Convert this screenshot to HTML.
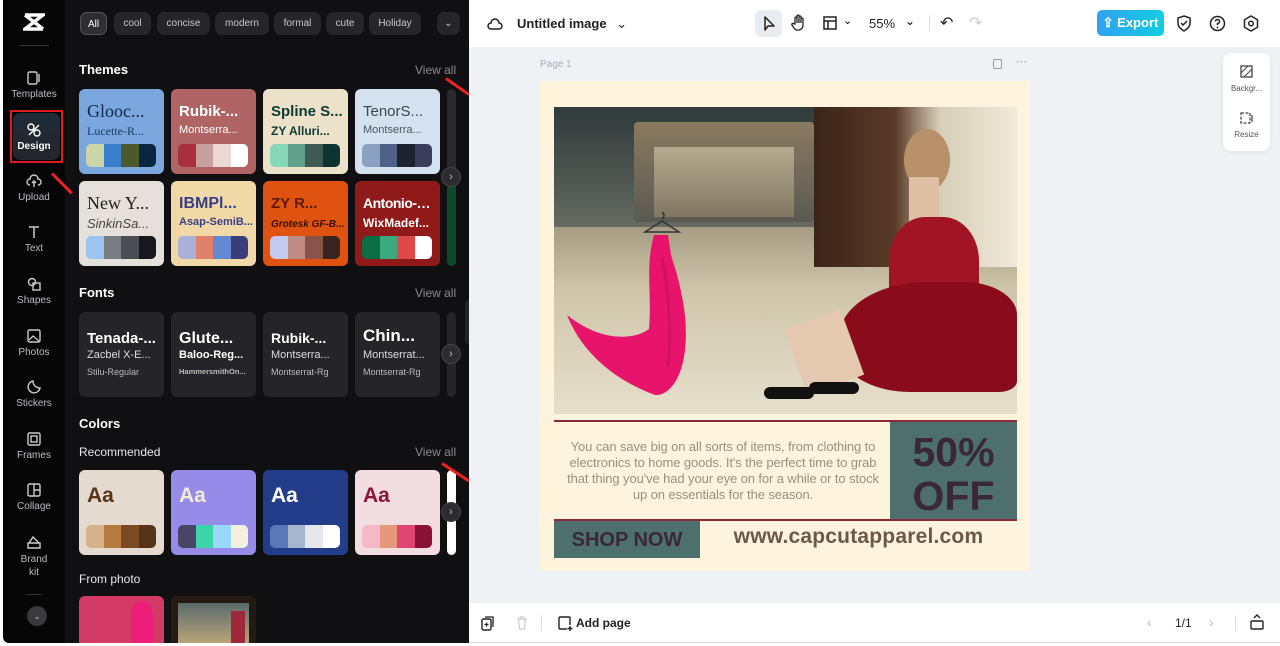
<!DOCTYPE html>
<html><head><meta charset="utf-8"><style>
*{box-sizing:border-box;margin:0;padding:0}
body{width:1280px;height:646px;overflow:hidden;background:#fff;font-family:"Liberation Sans",sans-serif;position:relative}
.rail{position:absolute;left:3px;top:0;width:62px;height:643px;background:#060607;border-radius:0 0 0 6px}
.panel{position:absolute;left:65px;top:0;width:404px;height:643px;background:#101012}
.ri{position:absolute;left:0;width:62px;text-align:center;color:#bdbdc2;font-size:10px}
.ri svg{display:block;margin:0 auto 3px}
.chip{position:absolute;top:12px;height:23px;border-radius:7px;background:#26262a;color:#c8c8cc;font-size:10px;line-height:23px;text-align:center}
.h{position:absolute;left:79px;color:#fff;font-weight:bold;font-size:13px}
.va{position:absolute;left:415px;color:#8a8a90;font-size:12px}
.card{position:absolute;width:85px;height:85px;border-radius:6px;overflow:hidden}
.card .t1{position:absolute;left:8px;top:14px;width:74px;overflow:hidden;font-size:15px;font-weight:bold;white-space:nowrap;text-overflow:ellipsis}
.card .t2{position:absolute;left:8px;top:35px;width:74px;overflow:hidden;font-size:11px;white-space:nowrap;text-overflow:ellipsis}
.pal{position:absolute;left:7px;top:55px;width:70px;height:23px;border-radius:5px;overflow:hidden;display:flex}
.pal i{flex:1}
.fc{position:absolute;top:312px;width:85px;height:85px;border-radius:6px;background:#252529;color:#fff;overflow:hidden}
.fc b{position:absolute;left:8px;top:18px;font-size:15px;white-space:nowrap}
.fc span{position:absolute;left:8px;top:37px;font-size:11px;color:#ddd;white-space:nowrap}
.fc small{position:absolute;left:8px;top:55px;font-size:9px;color:#bbb;white-space:nowrap}
.arr{position:absolute;left:441px;width:20px;height:20px;border-radius:50%;background:#2d2d31;border:1px solid #444;color:#bbb;font-size:11px;text-align:center;line-height:18px}
.cc .t1{font-size:21px;top:14px}
.canvas{position:absolute;left:469px;top:47px;width:811px;height:556px;background:#eff2f5}
.red{position:absolute;background:#e22;height:3px;transform-origin:left center}
</style></head><body>
<div class="rail">
 <svg style="position:absolute;left:20px;top:12px" width="22" height="20" viewBox="0 0 22 20"><path d="M2 3h18L2 17h18M2 3l18 14" stroke="#fff" stroke-width="3.4" fill="none"/></svg>
 <div style="position:absolute;left:16px;top:45px;width:30px;height:1px;background:#333"></div>
 <div class="ri" style="top:70px"><svg width="16" height="16" viewBox="0 0 16 16"><rect x="2" y="2" width="9" height="12" rx="1.5" stroke="#ccc" fill="none" stroke-width="1.4"/><path d="M13 4v8" stroke="#ccc" stroke-width="1.4"/></svg>Templates</div>
 <div style="position:absolute;left:7px;top:110px;width:53px;height:53px;border:2px solid #e01b1b"></div>
 <div style="position:absolute;left:10px;top:113px;width:47px;height:47px;border-radius:7px;background:linear-gradient(#1e2b3a,#23262b)"></div>
 <div class="ri" style="top:122px;color:#fff;font-weight:bold"><svg width="16" height="16" viewBox="0 0 16 16"><circle cx="5" cy="5" r="3" stroke="#fff" fill="none" stroke-width="1.4"/><circle cx="11" cy="11" r="3" stroke="#fff" fill="none" stroke-width="1.4"/><path d="M3 13L13 3" stroke="#fff" stroke-width="1.4"/></svg>Design</div>
 <div class="ri" style="top:173px"><svg width="16" height="16" viewBox="0 0 16 16"><path d="M4 12a3 3 0 0 1 0-6 4 4 0 0 1 8 0 3 3 0 0 1 0 6M8 8v6M6 10l2-2 2 2" stroke="#ccc" fill="none" stroke-width="1.4"/></svg>Upload</div>
 <div class="ri" style="top:224px"><svg width="16" height="16" viewBox="0 0 16 16"><path d="M3 3h10M8 3v11" stroke="#ccc" stroke-width="1.5"/></svg>Text</div>
 <div class="ri" style="top:276px"><svg width="16" height="16" viewBox="0 0 16 16"><circle cx="6" cy="6" r="3.5" stroke="#ccc" fill="none" stroke-width="1.4"/><rect x="7" y="7" width="7" height="7" stroke="#ccc" fill="none" stroke-width="1.4"/></svg>Shapes</div>
 <div class="ri" style="top:328px"><svg width="16" height="16" viewBox="0 0 16 16"><rect x="2" y="2" width="12" height="12" rx="1.5" stroke="#ccc" fill="none" stroke-width="1.4"/><path d="M3 12l4-4 6 5" stroke="#ccc" fill="none" stroke-width="1.3"/></svg>Photos</div>
 <div class="ri" style="top:379px"><svg width="16" height="16" viewBox="0 0 16 16"><path d="M14 9A6 6 0 1 1 7 2c0 4 3 7 7 7z" stroke="#ccc" fill="none" stroke-width="1.4"/></svg>Stickers</div>
 <div class="ri" style="top:431px"><svg width="16" height="16" viewBox="0 0 16 16"><rect x="2" y="2" width="12" height="12" rx="1.5" stroke="#ccc" fill="none" stroke-width="1.4"/><rect x="5" y="5" width="6" height="6" stroke="#ccc" fill="none" stroke-width="1.4"/></svg>Frames</div>
 <div class="ri" style="top:482px"><svg width="16" height="16" viewBox="0 0 16 16"><rect x="2" y="2" width="12" height="12" rx="1.5" stroke="#ccc" fill="none" stroke-width="1.4"/><path d="M8 2v12M8 8h6" stroke="#ccc" stroke-width="1.4"/></svg>Collage</div>
 <div class="ri" style="top:534px;line-height:13px"><svg width="16" height="16" viewBox="0 0 16 16"><path d="M2 9h12v5H2zM3 9l4-6 6 6" stroke="#ccc" fill="none" stroke-width="1.4"/></svg>Brand<br>kit</div>
 <div style="position:absolute;left:23px;top:594px;width:16px;height:1px;background:#333"></div>
 <div style="position:absolute;left:24px;top:606px;width:20px;height:20px;border-radius:50%;background:#3a3a3e;color:#bbb;font-size:9px;text-align:center;line-height:20px">⌄</div>
</div>
<div class="panel"></div>
<div class="chip" style="left:80px;width:27px;background:#2e2e33;border:1px solid #555;color:#fff">All</div>
<div class="chip" style="left:114px;width:37px">cool</div>
<div class="chip" style="left:157px;width:53px">concise</div>
<div class="chip" style="left:215px;width:54px">modern</div>
<div class="chip" style="left:274px;width:47px">formal</div>
<div class="chip" style="left:326px;width:38px">cute</div>
<div class="chip" style="left:369px;width:52px">Holiday</div>
<div class="chip" style="left:437px;width:23px">⌄</div>
<div class="h" style="top:62px">Themes</div><div class="va" style="top:63px">View all</div>
<div class="card" style="left:79px;top:89px;background:#7ba7de"><div class="t1" style="color:#0f2a4a;font-family:'Liberation Serif',serif;font-weight:normal;font-size:18px;top:12px">Glooc...</div><div class="t2" style="color:#1b3a5e;font-family:'Liberation Serif',serif;font-size:12px">Lucette-R...</div><div class="pal"><i style="background:#cbd5a8"></i><i style="background:#3a7fcc"></i><i style="background:#4a5a2e"></i><i style="background:#0b2642"></i></div></div>
<div class="card" style="left:171px;top:89px;background:#b06564"><div class="t1" style="color:#fff">Rubik-...</div><div class="t2" style="color:#fff">Montserra...</div><div class="pal"><i style="background:#a8303a"></i><i style="background:#c9a0a0"></i><i style="background:#e8d8d6"></i><i style="background:#fff"></i></div></div>
<div class="card" style="left:263px;top:89px;background:#ece1c9"><div class="t1" style="color:#0e3a34">Spline S...</div><div class="t2" style="color:#0e3a34;font-weight:bold;font-size:12px">ZY Alluri...</div><div class="pal"><i style="background:#86d8b8"></i><i style="background:#63a08e"></i><i style="background:#3e5a53"></i><i style="background:#0d3431"></i></div></div>
<div class="card" style="left:355px;top:89px;background:#d4e2ef"><div class="t1" style="color:#3a4556;font-weight:normal">TenorS...</div><div class="t2" style="color:#4a5566">Montserra...</div><div class="pal"><i style="background:#8ca0c2"></i><i style="background:#4f608a"></i><i style="background:#1e2130"></i><i style="background:#3a3d5c"></i></div></div>
<div class="card" style="left:447px;top:89px;width:9px;background:#2a2a2e"></div>
<div class="card" style="left:79px;top:181px;background:#e6e0da"><div class="t1" style="color:#222;font-family:'Liberation Serif',serif;font-weight:normal;font-size:18px;top:12px">New Y...</div><div class="t2" style="color:#444;font-style:italic;font-size:13px">SinkinSa...</div><div class="pal"><i style="background:#9cc4ee"></i><i style="background:#7a7d80"></i><i style="background:#4a4d54"></i><i style="background:#16181c"></i></div></div>
<div class="card" style="left:171px;top:181px;background:#f0d9a7"><div class="t1" style="color:#3a3f85;font-size:16px">IBMPl...</div><div class="t2" style="color:#3a3f85;font-weight:bold">Asap-SemiB...</div><div class="pal"><i style="background:#aab0d8"></i><i style="background:#e07f6a"></i><i style="background:#6388d4"></i><i style="background:#3a3d7a"></i></div></div>
<div class="card" style="left:263px;top:181px;background:#e0520f"><div class="t1" style="color:#5a1a04">ZY R...</div><div class="t2" style="color:#3a1004;font-weight:bold;font-style:italic;font-size:10px;top:38px">Grotesk GF-B...</div><div class="pal"><i style="background:#c4c9f0"></i><i style="background:#c08c86"></i><i style="background:#8a5548"></i><i style="background:#3a2420"></i></div></div>
<div class="card" style="left:355px;top:181px;background:#901a1a"><div class="t1" style="color:#fff;font-size:14px;letter-spacing:-.5px">Antonio-Bold</div><div class="t2" style="color:#fff;font-weight:bold;font-size:12px">WixMadef...</div><div class="pal"><i style="background:#0b6e45"></i><i style="background:#3aaa80"></i><i style="background:#de4848"></i><i style="background:#fff"></i></div></div>
<div class="card" style="left:447px;top:181px;width:9px;background:#0e4a2a"></div>
<div class="arr" style="top:167px">›</div>
<div class="h" style="top:285px">Fonts</div><div class="va" style="top:286px">View all</div>
<div class="fc" style="left:79px"><b>Tenada-...</b><span>Zacbel X-E...</span><small>Stilu-Regular</small></div>
<div class="fc" style="left:171px"><b style="font-size:16px">Glute...</b><span style="font-weight:bold;color:#fff">Baloo-Reg...</span><small style="font-size:7.5px;font-weight:bold">HammersmithOn...</small></div>
<div class="fc" style="left:263px"><b style="font-size:14px">Rubik-...</b><span>Montserra...</span><small>Montserrat-Rg</small></div>
<div class="fc" style="left:355px"><b style="font-size:17px;top:14px">Chin...</b><span>Montserrat...</span><small>Montserrat-Rg</small></div>
<div class="fc" style="left:447px;width:9px"></div>
<div class="arr" style="top:344px">›</div>
<div class="h" style="top:416px">Colors</div>
<div style="position:absolute;left:79px;top:445px;color:#e8e8ea;font-size:12px">Recommended</div><div class="va" style="top:445px">View all</div>
<div class="card cc" style="left:79px;top:470px;background:#e5dad0"><div class="t1" style="color:#5a3418">Aa</div><div class="pal"><i style="background:#d6b28a"></i><i style="background:#b47a40"></i><i style="background:#7a4a22"></i><i style="background:#55331b"></i></div></div>
<div class="card cc" style="left:171px;top:470px;background:#978bea"><div class="t1" style="color:#f3ecd4">Aa</div><div class="pal"><i style="background:#4a4466"></i><i style="background:#3dd4aa"></i><i style="background:#9ad8fa"></i><i style="background:#f4f0dc"></i></div></div>
<div class="card cc" style="left:263px;top:470px;background:#233d8a"><div class="t1" style="color:#fff">Aa</div><div class="pal"><i style="background:#5a78b8"></i><i style="background:#a6b6cc"></i><i style="background:#e4e8ec"></i><i style="background:#fff"></i></div></div>
<div class="card cc" style="left:355px;top:470px;background:#f2dde0"><div class="t1" style="color:#8a1638">Aa</div><div class="pal"><i style="background:#f5b8c6"></i><i style="background:#e6987a"></i><i style="background:#e04470"></i><i style="background:#8a1038"></i></div></div>
<div class="card" style="left:447px;top:470px;width:9px;background:#fff"></div>
<div class="arr" style="top:502px">›</div>
<div style="position:absolute;left:79px;top:572px;color:#e8e8ea;font-size:12px">From photo</div>
<div style="position:absolute;left:79px;top:596px;width:85px;height:47px;border-radius:6px 6px 0 0;background:#d43a66;overflow:hidden"><div style="position:absolute;left:52px;top:5px;width:22px;height:42px;background:#ec1e7a;border-radius:40% 40% 0 0"></div></div>
<div style="position:absolute;left:171px;top:596px;width:85px;height:47px;border-radius:6px 6px 0 0;background:#241a14"><div style="position:absolute;left:7px;top:7px;width:71px;height:40px;background:linear-gradient(#5a6a6c,#b8a47a)"></div><div style="position:absolute;left:60px;top:15px;width:14px;height:32px;background:#a0283a"></div></div>
<div style="position:absolute;left:465px;top:300px;width:8px;height:44px;border-radius:4px;background:#222"></div>
<div class="red" style="left:446px;top:77px;width:28px;transform:rotate(35deg)"></div>
<div class="red" style="left:52px;top:172px;width:28px;transform:rotate(45deg)"></div>
<div class="red" style="left:442px;top:462px;width:32px;transform:rotate(33deg)"></div>
<!-- top bar -->
<div style="position:absolute;left:469px;top:0;width:811px;height:47px;background:#fff"></div>
<svg style="position:absolute;left:487px;top:16px" width="16" height="16" viewBox="0 0 16 16"><path d="M4 13a3 3 0 0 1 0-6 4 4 0 0 1 8 0 3 3 0 0 1 0 6z" stroke="#222" fill="none" stroke-width="1.5"/></svg>
<div style="position:absolute;left:517px;top:16px;font-size:13px;color:#222;font-weight:bold">Untitled image <span style="font-weight:normal;margin-left:6px">⌄</span></div>
<div style="position:absolute;left:755px;top:10px;width:27px;height:27px;border-radius:6px;background:#e8ebef"></div>
<svg style="position:absolute;left:762px;top:15px" width="14" height="17" viewBox="0 0 14 17"><path d="M3 2v13l3-4h6z" stroke="#222" fill="none" stroke-width="1.5" stroke-linejoin="round"/></svg>
<svg style="position:absolute;left:791px;top:14px" width="16" height="18" viewBox="0 0 16 18"><path d="M4 10V4a1 1 0 0 1 2 0v5V2a1 1 0 0 1 2 0v7V3a1 1 0 0 1 2 0v6V5a1 1 0 0 1 2 0v7a5 5 0 0 1-9 2l-2-3a1 1 0 0 1 2-1z" stroke="#222" fill="none" stroke-width="1.3"/></svg>
<svg style="position:absolute;left:823px;top:16px" width="14" height="14" viewBox="0 0 14 14"><rect x="1" y="1" width="12" height="12" stroke="#222" fill="none" stroke-width="1.5"/><path d="M1 5h12M5 5v8" stroke="#222" stroke-width="1.5"/></svg>
<div style="position:absolute;left:843px;top:14px;font-size:11px">⌄</div>
<div style="position:absolute;left:869px;top:16px;font-size:13px;color:#222">55%</div>
<div style="position:absolute;left:905px;top:14px;font-size:12px">⌄</div>
<div style="position:absolute;left:929px;top:15px;width:1px;height:16px;background:#ddd"></div>
<div style="position:absolute;left:940px;top:13px;font-size:16px;color:#222">↶</div>
<div style="position:absolute;left:969px;top:13px;font-size:16px;color:#ccc">↷</div>
<div style="position:absolute;left:1097px;top:10px;width:67px;height:26px;border-radius:5px;background:linear-gradient(90deg,#31a3f0,#12cde0);color:#fff;font-weight:bold;font-size:13px;line-height:26px;text-align:center">⇪ Export</div>
<svg style="position:absolute;left:1176px;top:15px" width="16" height="17" viewBox="0 0 16 17"><path d="M8 1l6 2v5c0 4-3 6-6 8-3-2-6-4-6-8V3z" stroke="#222" fill="none" stroke-width="1.5"/><path d="M5 8l2 2 4-4" stroke="#222" fill="none" stroke-width="1.5"/></svg>
<svg style="position:absolute;left:1209px;top:15px" width="17" height="17" viewBox="0 0 17 17"><circle cx="8.5" cy="8.5" r="7" stroke="#222" fill="none" stroke-width="1.5"/><path d="M6.5 6.5a2 2 0 1 1 2 2v1.5" stroke="#222" fill="none" stroke-width="1.5"/><circle cx="8.5" cy="12.5" r=".9" fill="#222"/></svg>
<svg style="position:absolute;left:1243px;top:15px" width="16" height="17" viewBox="0 0 16 17"><path d="M8 1l6.5 3.75v7.5L8 16l-6.5-3.75v-7.5z" stroke="#222" fill="none" stroke-width="1.5"/><circle cx="8" cy="8.5" r="2.3" stroke="#222" fill="none" stroke-width="1.5"/></svg>
<!-- canvas -->
<div class="canvas"></div>
<div style="position:absolute;left:540px;top:59px;font-size:10px;color:#aab">Page 1</div>
<div style="position:absolute;left:993px;top:59px;width:9px;height:10px;border:1.3px solid #999;border-radius:2px"></div>
<div style="position:absolute;left:1016px;top:56px;font-size:11px;color:#777">···</div>
<div style="position:absolute;left:1223px;top:53px;width:47px;height:98px;border-radius:8px;background:#fff;box-shadow:0 1px 4px rgba(0,0,0,.08)"></div>
<svg style="position:absolute;left:1240px;top:65px" width="13" height="13" viewBox="0 0 13 13"><rect x="1" y="1" width="11" height="11" stroke="#444" fill="none" stroke-width="1.3"/><path d="M1 8l7-7M4 12l8-8" stroke="#444" stroke-width="1.1"/></svg>
<div style="position:absolute;left:1226px;top:84px;width:41px;text-align:center;font-size:8px;color:#555">Backgr...</div>
<svg style="position:absolute;left:1240px;top:111px" width="13" height="14" viewBox="0 0 13 14"><rect x="1" y="2" width="9" height="10" stroke="#444" fill="none" stroke-width="1.3" stroke-dasharray="3 1.5"/><path d="M12 4v7" stroke="#444" stroke-width="1.3"/></svg>
<div style="position:absolute;left:1226px;top:130px;width:41px;text-align:center;font-size:8px;color:#555">Resize</div>
<!-- design -->
<div style="position:absolute;left:539px;top:81px;width:491px;height:490px;background:#fef3dc"></div>
<div style="position:absolute;left:554px;top:107px;width:463px;height:307px;overflow:hidden;background:linear-gradient(180deg,#3b3f3c 0%,#6b6a5e 22%,#a89e84 40%,#cfc6aa 60%,#e6dfcc 100%)">
 <div style="position:absolute;left:0;top:0;width:270px;height:120px;background:linear-gradient(180deg,#2f3a3a,#5a625c);opacity:.85"></div>
 <div style="position:absolute;left:80px;top:15px;width:180px;height:100px;background:linear-gradient(#8a7a60,#5a5a52);border-radius:4px"></div>
 <div style="position:absolute;left:100px;top:40px;width:140px;height:70px;background:linear-gradient(#c4b89a,#8a7e66);opacity:.8"></div>
 <div style="position:absolute;left:260px;top:0;width:203px;height:160px;background:linear-gradient(90deg,#3a2418,#5a3a28 40%,#d8ceb8 62%,#f0eada)"></div>
 <div style="position:absolute;left:350px;top:22px;width:46px;height:62px;border-radius:50%;background:#b8906a"></div>
 <div style="position:absolute;left:355px;top:70px;width:30px;height:50px;background:#e0c0a4"></div>
 <div style="position:absolute;left:335px;top:110px;width:90px;height:110px;border-radius:40% 40% 20% 20%;background:#a01424"></div>
 <div style="position:absolute;left:285px;top:175px;width:178px;height:110px;border-radius:50% 30% 10% 40%;background:#8a0c1c"></div>
 <div style="position:absolute;left:240px;top:210px;width:60px;height:70px;background:#e4c8b0;transform:rotate(-20deg)"></div>
 <div style="position:absolute;left:210px;top:280px;width:50px;height:12px;border-radius:6px;background:#111"></div>
 <div style="position:absolute;left:255px;top:275px;width:50px;height:12px;border-radius:6px;background:#111"></div>
 <svg style="position:absolute;left:0;top:0" width="160" height="307" viewBox="0 0 160 307"><path d="M108 112q4-4 0-7M91 125h34l-17-11z" stroke="#333" fill="none" stroke-width="1.5"/><path d="M100 128h14l3 20c8 25 18 60 14 95-4 35-20 46-30 45-38-14-72-40-88-80 32 26 66 26 82 14 3-35-4-62 5-94z" fill="#e8146c"/><path d="M108 150c6 30 10 70 6 110" stroke="#b80f55" stroke-width="3" fill="none" opacity=".5"/></svg>
</div>
<div style="position:absolute;left:554px;top:420px;width:463px;height:2px;background:#8a2a3a"></div>
<div style="position:absolute;left:890px;top:422px;width:127px;height:97px;background:#4e706d"></div>
<div style="position:absolute;left:890px;top:430px;width:127px;text-align:center;font-size:41px;line-height:44px;font-weight:bold;color:#3a2834">50%<br>OFF</div>
<div style="position:absolute;left:561px;top:439px;width:324px;text-align:center;font-size:13px;line-height:16px;color:#9a9080;letter-spacing:-.1px">You can save big on all sorts of items, from clothing to electronics to home goods. It's the perfect time to grab that thing you've had your eye on for a while or to stock up on essentials for the season.</div>
<div style="position:absolute;left:554px;top:519px;width:463px;height:2px;background:#8a2a3a"></div>
<div style="position:absolute;left:554px;top:521px;width:146px;height:37px;background:#4e706d;color:#3a2834;font-weight:bold;font-size:20px;line-height:38px;text-align:center">SHOP NOW</div>
<div style="position:absolute;left:700px;top:525px;width:317px;text-align:center;font-size:21px;color:#6a5848;font-weight:bold;letter-spacing:.2px">www.capcutapparel.com</div>
<!-- bottom bar -->
<div style="position:absolute;left:469px;top:603px;width:811px;height:40px;background:#fff;border-bottom:1px solid #ddd"></div>
<svg style="position:absolute;left:481px;top:616px" width="14" height="15" viewBox="0 0 14 15"><rect x="1" y="3" width="9" height="11" rx="1.5" stroke="#222" fill="none" stroke-width="1.4"/><path d="M4 1h8v10M5.5 6.5v4M3.5 8.5h4" stroke="#222" fill="none" stroke-width="1.3"/></svg>
<svg style="position:absolute;left:516px;top:616px" width="12" height="14" viewBox="0 0 12 14"><path d="M1 3h10M4 3V1h4v2M2.5 3l1 10h5l1-10" stroke="#ccc" fill="none" stroke-width="1.2"/></svg>
<div style="position:absolute;left:541px;top:615px;width:1px;height:16px;background:#ddd"></div>
<svg style="position:absolute;left:557px;top:615px" width="16" height="16" viewBox="0 0 16 16"><path d="M10 14H3a1 1 0 0 1-1-1V3a1 1 0 0 1 1-1h9a1 1 0 0 1 1 1v7M13 11v5M10.5 13.5h5" stroke="#222" fill="none" stroke-width="1.4"/></svg>
<div style="position:absolute;left:576px;top:616px;font-size:12px;color:#222;font-weight:bold">Add page</div>
<div style="position:absolute;left:1147px;top:614px;font-size:14px;color:#bbb">‹</div>
<div style="position:absolute;left:1175px;top:616px;font-size:12px;color:#222">1/1</div>
<div style="position:absolute;left:1209px;top:614px;font-size:14px;color:#bbb">›</div>
<div style="position:absolute;left:1235px;top:615px;width:1px;height:16px;background:#ddd"></div>
<svg style="position:absolute;left:1250px;top:614px" width="14" height="16" viewBox="0 0 14 16"><rect x="1" y="7" width="12" height="8" rx="1" stroke="#222" fill="none" stroke-width="1.4"/><path d="M4 4l3-3 3 3" stroke="#222" fill="none" stroke-width="1.4"/></svg>
</body></html>
